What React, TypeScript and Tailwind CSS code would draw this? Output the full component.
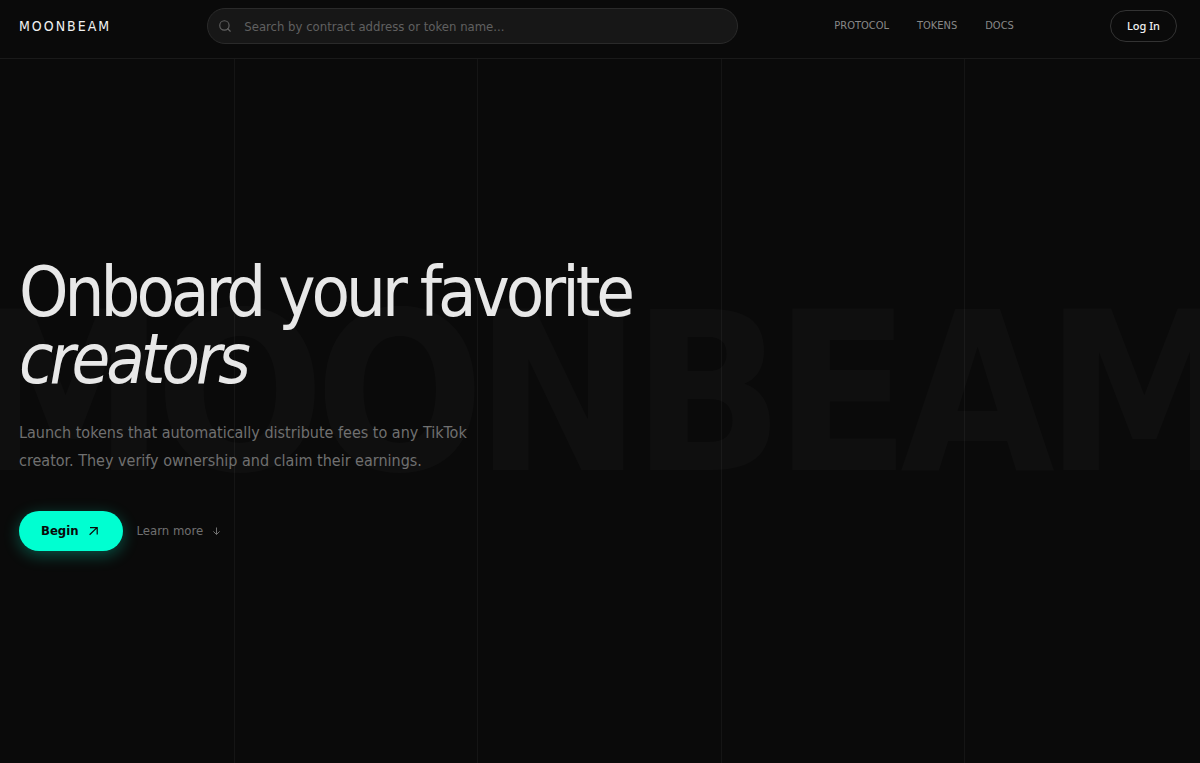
import { Search } from 'lucide-react';

const NAV_LINKS = [
  { label: 'Protocol', href: '#protocol' },
  { label: 'Tokens', href: '#tokens' },
  { label: 'Docs', href: '#docs' },
];

function ArrowOut() {
  return (
    <svg viewBox="0 0 14 14" className="size-3.5" fill="none" stroke="currentColor" strokeWidth="1.2" aria-hidden="true">
      <path d="M2.6 10.8L10 3.6M3 3.6H10.2V10.4" />
    </svg>
  );
}

function ArrowDown() {
  return (
    <svg viewBox="0 0 12 12" className="size-3" fill="none" stroke="currentColor" strokeWidth="1" aria-hidden="true">
      <path d="M5.5 2.5V9.5M2.4 6.4L5.5 9.5L8.6 6.4" />
    </svg>
  );
}

function Header() {
  return (
    <header className="relative z-20 flex items-center justify-between border-b border-[#1a1a1a] bg-[#0a0a0a] pt-2 pr-[23px] pb-3.5 pl-[19px]">
      <a href="#top" className="text-sm leading-5 font-medium tracking-[2px] text-[#f0f0f0]">
        MOONBEAM
      </a>

      <form role="search" className="relative max-w-[531px] flex-1">
        <Search
          className="absolute top-1/2 left-[11px] size-3.5 -translate-y-1/2 text-[#606060]"
          strokeWidth={2}
        />
        <input
          type="text"
          aria-label="Search tokens"
          placeholder="Search by contract address or token name..."
          className="block h-9 w-full rounded-full border border-[#2a2a2a] bg-[#171717] pr-4 pl-9 text-[13px] text-[#e8e8e8] outline-none placeholder:text-[#606060]"
        />
      </form>

      <nav className="flex items-center gap-7">
        {NAV_LINKS.map((link) => (
          <a
            key={link.label}
            href={link.href}
            className="text-[11px] leading-4 text-[#888888] uppercase hover:text-white"
          >
            {link.label}
          </a>
        ))}
      </nav>

      <button
        type="button"
        className="h-8 rounded-full border border-[#333333] px-4 font-['Noto_Sans',sans-serif] text-[11px] font-medium text-[#f0f0f0]"
      >
        Log In
      </button>
    </header>
  );
}

function Hero() {
  return (
    <main className="relative flex flex-1 flex-col justify-center overflow-hidden px-[19px] pb-3">
      {/* Column guides */}
      <div aria-hidden="true" className="absolute inset-y-0 -right-2 -left-2 grid grid-cols-5">
        <div className="border-r border-[#151515]" />
        <div className="border-r border-[#151515]" />
        <div className="border-r border-[#151515]" />
        <div className="border-r border-[#151515]" />
      </div>

      {/* Watermark */}
      <div
        aria-hidden="true"
        className="pointer-events-none absolute inset-0 flex items-center justify-center pb-9 text-[222px] leading-none font-bold tracking-[-10px] text-white/[0.025] select-none"
      >
        MOONBEAM
      </div>

      <div className="relative">
        <h1 className="text-[70px] leading-[67px] font-medium tracking-[-4px] text-[#e8e8e8]">
          Onboard your favorite
          <br />
          <em>creators</em>
        </h1>
        <p className="mt-[26px] max-w-[480px] text-base leading-7 text-[#707070]">
          Launch tokens that automatically distribute fees to any TikTok creator. They verify
          ownership and claim their earnings.
        </p>
        <div className="mt-9 flex items-center gap-3.5">
          <button
            type="button"
            className="flex h-10 items-center gap-2 rounded-full bg-[#00ffd1] px-[22px] text-[13px] font-bold text-[#0a0a0a] shadow-[0_4px_16px_rgba(0,255,209,0.3)]"
          >
            Begin
            <ArrowOut />
          </button>
          <a href="#protocol" className="flex items-center gap-2 text-[13px] text-[#707070]">
            Learn more
            <ArrowDown />
          </a>
        </div>
      </div>
    </main>
  );
}

export default function App() {
  return (
    <div
      id="top"
      className="flex min-h-screen flex-col bg-[#0a0a0a] font-['DejaVu_Sans_Condensed','DejaVu_Sans',sans-serif]"
    >
      <Header />
      <Hero />
    </div>
  );
}
